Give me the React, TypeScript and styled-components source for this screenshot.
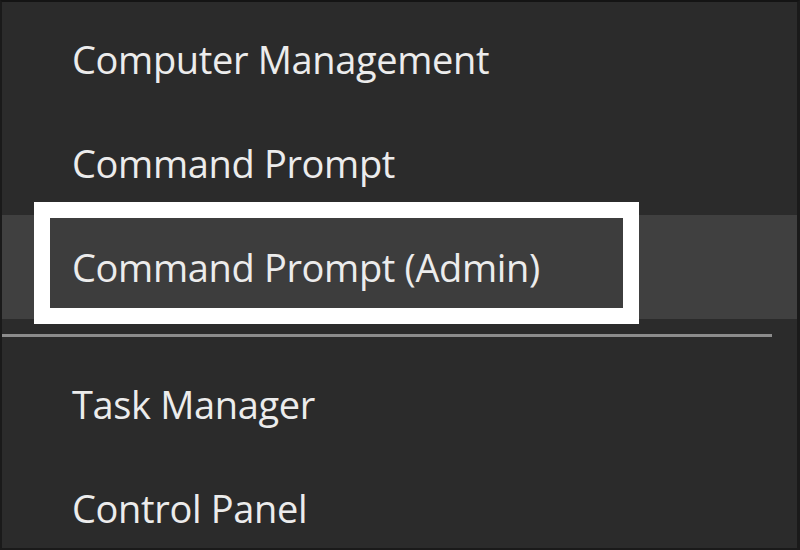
import React from 'react';
import styled, { createGlobalStyle } from 'styled-components';

const GlobalStyle = createGlobalStyle`
  html, body {
    margin: 0;
    padding: 0;
    background: #2b2b2b;
  }
  * {
    box-sizing: border-box;
  }
`;

const SC_Frame = styled.div`
  width: 800px;
  height: 550px;
  overflow: hidden;
  background: #2b2b2b;
  border-top: 2px solid #141414;
  border-left: 2px solid #1a1a1a;
  border-right: 3px solid #1a1a1a;
  border-bottom: 2px solid #1a1a1a;
  padding-top: 5px;
  display: flex;
  flex-direction: column;
  font-family: 'Open Sans', 'Noto Sans', sans-serif;
`;

const SC_Row = styled.div<{ active?: boolean }>`
  position: relative;
  height: 104px;
  flex-shrink: 0;
  display: flex;
  align-items: center;
  padding-left: 70px;
  color: #ececec;
  font-size: 38px;
  letter-spacing: -0.35px;
  background: ${(props) => (props.active ? '#404040' : 'transparent')};
`;

const SC_Label = styled.span`
  position: relative;
  z-index: 1;
  white-space: nowrap;
`;

// white annotation box drawn over the highlighted row
const SC_Callout = styled.div`
  position: absolute;
  left: 32px;
  top: -13px;
  width: 605px;
  height: 122px;
  border: 16px solid #ffffff;
  background: #3d3d3d;
`;

const SC_Divider = styled.div`
  height: 33px;
  flex-shrink: 0;
  display: flex;
  align-items: center;
  padding-right: 25px;

  &::after {
    content: '';
    flex: 1;
    height: 3px;
    background: #8c8c8c;
  }
`;

const MenuItem = ({ label, isActive }: { label: string; isActive?: boolean }) => {
  return (
    <SC_Row active={isActive}>
      {isActive && <SC_Callout />}
      <SC_Label>{label}</SC_Label>
    </SC_Row>
  );
};

const topGroup = [
  { key: 'compmgmt', label: 'Computer Management' },
  { key: 'cmd', label: 'Command Prompt' },
  { key: 'cmdAdmin', label: 'Command Prompt (Admin)', active: true },
];

const bottomGroup = [
  { key: 'taskmgr', label: 'Task Manager' },
  { key: 'control', label: 'Control Panel' },
];

export default function App() {
  return (
    <>
      <GlobalStyle />
      <SC_Frame>
        {topGroup.map((item) => (
          <MenuItem key={item.key} label={item.label} isActive={item.active} />
        ))}
        <SC_Divider />
        {bottomGroup.map((item) => (
          <MenuItem key={item.key} label={item.label} />
        ))}
      </SC_Frame>
    </>
  );
}
